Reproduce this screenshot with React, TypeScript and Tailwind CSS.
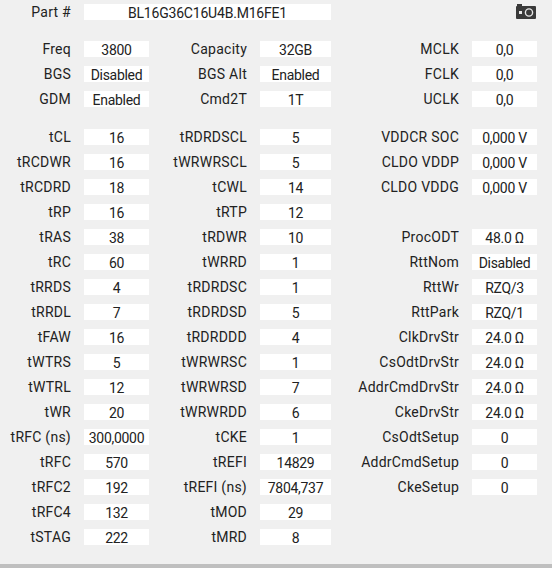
type RowData = [string, string, string, string, string?, string?];

const topRows: RowData[] = [
  ['Freq', '3800', 'Capacity', '32GB', 'MCLK', '0,0'],
  ['BGS', 'Disabled', 'BGS Alt', 'Enabled', 'FCLK', '0,0'],
  ['GDM', 'Enabled', 'Cmd2T', '1T', 'UCLK', '0,0'],
];

const timingRows: RowData[] = [
  ['tCL', '16', 'tRDRDSCL', '5', 'VDDCR SOC', '0,000 V'],
  ['tRCDWR', '16', 'tWRWRSCL', '5', 'CLDO VDDP', '0,000 V'],
  ['tRCDRD', '18', 'tCWL', '14', 'CLDO VDDG', '0,000 V'],
  ['tRP', '16', 'tRTP', '12'],
  ['tRAS', '38', 'tRDWR', '10', 'ProcODT', '48.0 Ω'],
  ['tRC', '60', 'tWRRD', '1', 'RttNom', 'Disabled'],
  ['tRRDS', '4', 'tRDRDSC', '1', 'RttWr', 'RZQ/3'],
  ['tRRDL', '7', 'tRDRDSD', '5', 'RttPark', 'RZQ/1'],
  ['tFAW', '16', 'tRDRDDD', '4', 'ClkDrvStr', '24.0 Ω'],
  ['tWTRS', '5', 'tWRWRSC', '1', 'CsOdtDrvStr', '24.0 Ω'],
  ['tWTRL', '12', 'tWRWRSD', '7', 'AddrCmdDrvStr', '24.0 Ω'],
  ['tWR', '20', 'tWRWRDD', '6', 'CkeDrvStr', '24.0 Ω'],
  ['tRFC (ns)', '300,0000', 'tCKE', '1', 'CsOdtSetup', '0'],
  ['tRFC', '570', 'tREFI', '14829', 'AddrCmdSetup', '0'],
  ['tRFC2', '192', 'tREFI (ns)', '7804,737', 'CkeSetup', '0'],
  ['tRFC4', '132', 'tMOD', '29'],
  ['tSTAG', '222', 'tMRD', '8'],
];

const Label = ({ text }: { text?: string }) => (
  <div className="h-4 pr-[13px] text-right leading-[17px] tracking-[0.25px] whitespace-nowrap">{text}</div>
);

const Value = ({ text }: { text: string }) => (
  <div className="h-4 bg-white text-center leading-[18px] tracking-[-0.3px] whitespace-nowrap">{text}</div>
);

const Row = ({ row }: { row: RowData }) => (
  <div className="grid grid-cols-[84px_65px_111px_71px_141px_65px]">
    <Label text={row[0]} />
    <Value text={row[1]} />
    <Label text={row[2]} />
    <Value text={row[3]} />
    <Label text={row[4]} />
    {row[5] && <Value text={row[5]} />}
  </div>
);

const App = () => {
  return (
    <div className="flex h-[568px] w-[552px] flex-col overflow-hidden bg-[#f0f0f0] font-['Roboto',sans-serif] text-[14px] text-[#222222]">
      <div className="flex flex-1 flex-col pt-1">
        <div className="flex items-center">
          <div className="h-4 w-[84px] pr-[13px] text-right leading-[17px] tracking-[0.25px]">Part #</div>
          <div className="h-4 w-[247px] bg-white text-center leading-[18px] tracking-[-0.2px]">BL16G36C16U4B.M16FE1</div>
          <svg className="ml-[185px] h-4 w-5" viewBox="0 0 20 16">
            <path d="M1 0h5v2h13a1 1 0 0 1 1 1v11a1 1 0 0 1-1 1H1a1 1 0 0 1-1-1V3a1 1 0 0 1 1-1z" fill="#3a3a3a" />
            <circle cx="13" cy="8.5" r="3.6" fill="none" stroke="#e8e8e8" strokeWidth="1.4" />
            <rect x="3" y="7" width="3" height="3" fill="#e8e8e8" />
          </svg>
        </div>
        <div className="mt-[21px] flex flex-col gap-[9px]">
          {topRows.map((row) => (
            <Row key={row[0]} row={row} />
          ))}
        </div>
        <div className="mt-[22px] flex flex-col gap-[9px]">
          {timingRows.map((row) => (
            <Row key={row[0]} row={row} />
          ))}
        </div>
      </div>
      <div className="h-1 bg-[#bfbfbf]" />
    </div>
  );
};

export default App;
